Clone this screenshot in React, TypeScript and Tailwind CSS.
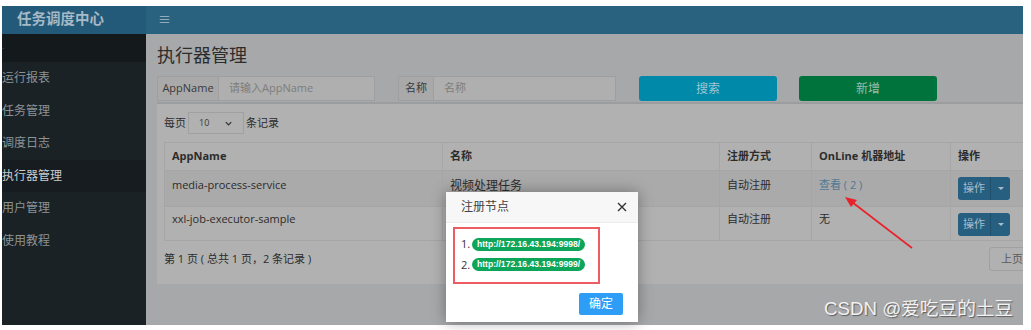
import React from 'react';

const font = { fontFamily: '"Open Sans", "Noto Sans CJK SC", sans-serif' };

const menu = ['运行报表', '任务管理', '调度日志', '执行器管理', '用户管理', '使用教程'];

const rows = [
  { app: 'media-process-service', name: '视频处理任务', type: '自动注册', online: '查看 ( 2 )', link: true },
  { app: 'xxl-job-executor-sample', name: '', type: '自动注册', online: '无', link: false },
];

function OpButton() {
  return (
    <div className="flex h-[23px] w-[52px] rounded-[3px] bg-[#265f80] text-[11px] text-[#a9bccb]">
      <span className="flex w-[33px] items-center justify-center border-r border-[#1f4f6a]">操作</span>
      <span className="flex flex-1 items-center justify-center">
        <span className="h-0 w-0 border-x-[3px] border-t-[3px] border-x-transparent border-t-[#a9bccb]" />
      </span>
    </div>
  );
}

export default function App() {
  return (
    <div className="relative h-[330px] w-[1031px] overflow-hidden bg-white" style={font}>
      <div className="flex h-[325px] flex-col pl-[2px] pr-[8px] pt-[6px]">
        {/* Header */}
        <div className="flex h-[28px] shrink-0">
          <div className="flex w-[144px] items-center bg-[#245a79] pb-[3px] pl-[15px] text-[14.5px] font-bold text-[#a5b9c6]">
            任务调度中心
          </div>
          <div className="flex flex-1 items-center bg-[#29627f] pl-[12px] text-[13px] text-[#a5b9c6]">≡</div>
        </div>

        <div className="flex min-h-0 flex-1">
          {/* Sidebar */}
          <div className="w-[144px] shrink-0 bg-[#1b2226] text-[12px] text-[#8b9397]">
            <div className="flex h-[28px] items-center bg-[#14191c] text-[8px] text-[#6b7378]">·</div>
            {menu.map((m) => (
              <div
                key={m}
                className={`flex h-[32.5px] items-center ${m === '执行器管理' ? 'bg-[#161c1f] text-[#c8cdd0]' : ''}`}
              >
                {m}
              </div>
            ))}
          </div>

          {/* Main */}
          <div className="min-w-0 flex-1 overflow-hidden bg-[#a7a8aa] pl-[11px] pt-[9px]">
            <div className="text-[18px] leading-[24px] text-[#2c2c2c]">执行器管理</div>

            <div className="mt-[9px] flex h-[25px] items-stretch text-[11px]">
              <div className="flex w-[218px] border border-[#9f9f9f] bg-[#afafaf]">
                <span className="flex w-[61px] items-center justify-center border-r border-[#9f9f9f] bg-[#a9a9a9] text-[#3a3a3a]">AppName</span>
                <span className="flex items-center pl-[10px] text-[#7d7d7d]">请输入AppName</span>
              </div>
              <div className="ml-[23px] flex w-[218px] border border-[#9f9f9f] bg-[#afafaf]">
                <span className="flex w-[35px] items-center justify-center border-r border-[#9f9f9f] bg-[#a9a9a9] text-[#3a3a3a]">名称</span>
                <span className="flex items-center pl-[10px] text-[#7d7d7d]">名称</span>
              </div>
              <div className="ml-[23px] flex w-[138px] items-center justify-center rounded-[3px] bg-[#0089a9] text-[12px] text-[#9cc7d4]">搜索</div>
              <div className="ml-[22px] flex w-[138px] items-center justify-center rounded-[3px] bg-[#00733c] text-[12px] text-[#9cbcaa]">新增</div>
            </div>

            {/* Box */}
            <div className="mt-px h-[182px] border-t-[2px] border-[#9c9d9f] bg-[#b1b1b1] pl-[7px] pt-[8px]">
              <div className="flex h-[22px] items-center text-[11px] text-[#2c2c2c]">
                <span>每页</span>
                <span className="mx-[2px] flex h-[22px] w-[56px] items-center justify-between border border-[#a0a0a0] px-[10px] text-[9px] text-[#3a3a3a]">
                  10
                  <svg width="9" height="9" viewBox="0 0 10 10"><path d="M2 3.5l3 3 3-3" fill="none" stroke="#333" strokeWidth="1.4" /></svg>
                </span>
                <span>条记录</span>
              </div>

              <table className="mt-[8px] w-[880px] table-fixed border-collapse text-[11px] text-[#2c2c2c]">
                <colgroup>
                  <col className="w-[278px]" />
                  <col className="w-[277px]" />
                  <col className="w-[92px]" />
                  <col className="w-[139px]" />
                  <col className="w-[94px]" />
                </colgroup>
                <thead>
                  <tr className="h-[28px] text-left font-bold">
                    {['AppName', '名称', '注册方式', 'OnLine 机器地址', '操作'].map((h) => (
                      <th key={h} className="border border-[#a6a6a6] px-[7px] font-bold">{h}</th>
                    ))}
                  </tr>
                </thead>
                <tbody>
                  {rows.map((r, i) => {
                    const pad = i === 0 ? 'pt-[6px]' : 'pt-[4px]';
                    return (
                      <tr key={r.app} className={`${i === 0 ? 'h-[36px] bg-[#aaaaaa]' : 'h-[34px]'}`}>
                        <td className={`border border-[#a6a6a6] px-[7px] align-top ${pad}`}>{r.app}</td>
                        <td className={`border border-[#a6a6a6] px-[7px] align-top text-[12px] ${pad}`}>{r.name}</td>
                        <td className={`border border-[#a6a6a6] px-[7px] align-top ${pad}`}>{r.type}</td>
                        <td className={`border border-[#a6a6a6] px-[7px] align-top ${pad} ${r.link ? 'text-[#4f7893]' : ''}`}>{r.online}</td>
                        <td className="border border-[#a6a6a6] px-[7px] align-top pt-[6px]"><OpButton /></td>
                      </tr>
                    );
                  })}
                </tbody>
              </table>

              <div className="mt-[6px] flex items-center justify-between">
                <span className="text-[11px] text-[#2c2c2c]">第 1 页 ( 总共 1 页，2 条记录 )</span>
                <span className="mr-[-12px] flex h-[24px] w-[46px] items-center justify-center rounded-[3px] border border-[#a0a0a0] text-[11px] text-[#5a5a5a]">上页</span>
              </div>
            </div>
          </div>
        </div>
      </div>

      {/* Red arrow annotation */}
      <svg className="absolute left-[840px] top-[192px]" width="80" height="62" viewBox="0 0 80 62">
        <line x1="72" y1="56" x2="8" y2="7" stroke="#e8222a" strokeWidth="1.6" />
        <path d="M5 5 L17 8 L11 15 Z" fill="#e8222a" />
      </svg>

      {/* Modal */}
      <div className="absolute left-[446px] top-[192px] flex h-[130px] w-[192px] flex-col bg-white shadow-[0_0_14px_rgba(0,0,0,0.35)]">
        <div className="flex h-[31px] items-center justify-between border-b border-[#ececec] bg-[#f7f7f7] pl-[15px] pr-[11px] text-[12px] text-[#444]">
          <span>注册节点</span>
          <svg width="10" height="10" viewBox="0 0 10 10"><path d="M1 1l8 8M9 1l-8 8" stroke="#333" strokeWidth="1.4" /></svg>
        </div>
        <div className="ml-[7px] mt-[4px] flex h-[57px] w-[147px] flex-col justify-center gap-[4px] border-2 border-[#ee5c63] pl-[6px] pb-[2px]">
          {['http://172.16.43.194:9998/', 'http://172.16.43.194:9999/'].map((u, i) => (
            <div key={u} className="flex items-center text-[11px] text-[#333]">
              <span className="w-[11px]">{i + 1}.</span>
              <span
                className="flex h-[13px] items-center rounded-full bg-[#0ca55a] px-[5px] font-bold text-white"
                style={{ fontFamily: '"Liberation Sans", sans-serif', fontSize: '8.6px' }}
              >
                {u}
              </span>
            </div>
          ))}
        </div>
        <div className="flex flex-1 items-center justify-end pr-[15px] pt-[2px]">
          <span className="flex h-[22px] w-[44px] items-center justify-center rounded-[2px] bg-[#2d9df5] text-[12px] text-white">确定</span>
        </div>
      </div>

      {/* Watermark */}
      <div
        className="absolute left-[824px] top-[295px] text-[18.7px] text-[#f2f2f2]"
        style={{ fontFamily: '"Liberation Sans", "Noto Sans CJK SC", sans-serif', textShadow: '1px 1px 1px rgba(0,0,0,0.45)' }}
      >
        CSDN @爱吃豆的土豆
      </div>
    </div>
  );
}
